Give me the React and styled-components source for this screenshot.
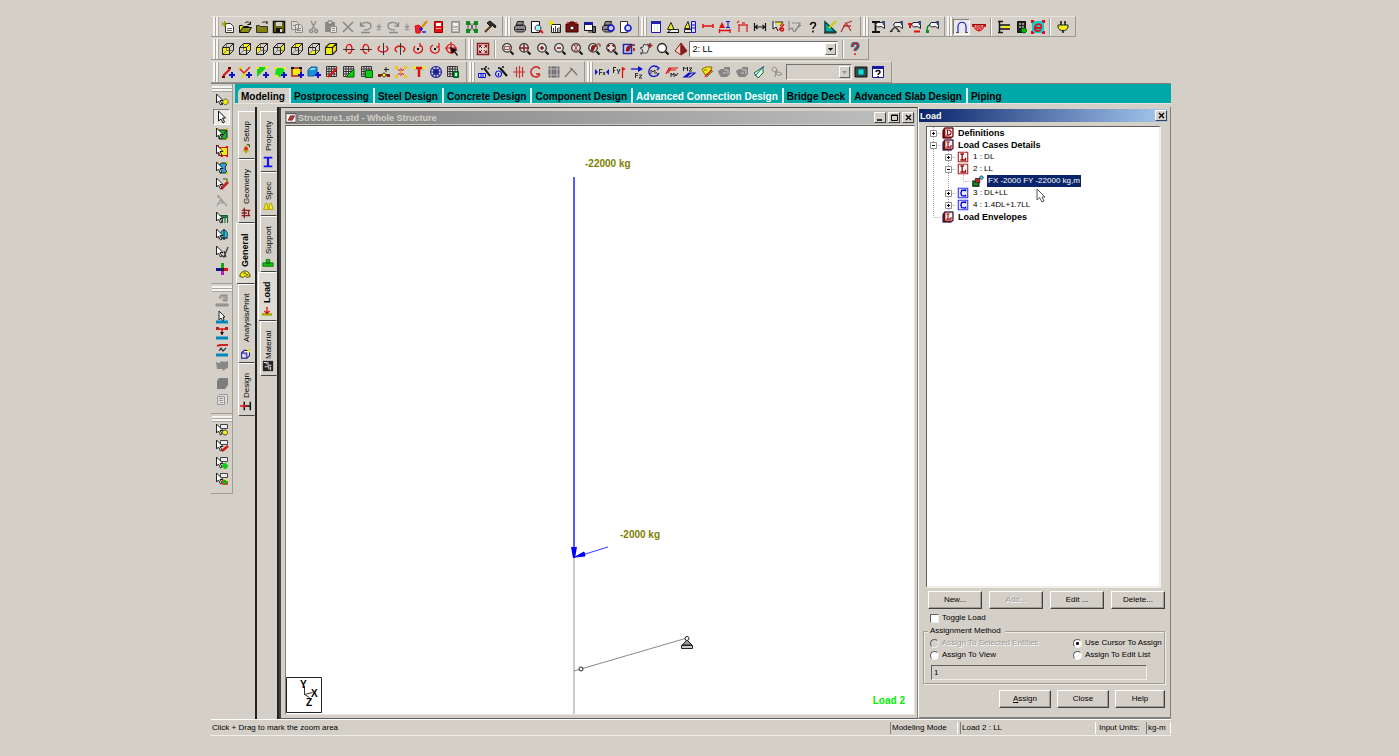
import React, { useState } from 'react'
import styled, { createGlobalStyle } from 'styled-components'

const GlobalStyle = createGlobalStyle`
    * {
        box-sizing: border-box;
    }
    body {
        margin: 0;
        background-color: #d4d0c8;
        color: #000;
        font-family: "Liberation Sans", sans-serif;
        font-size: 8px;
        line-height: 12px;
    }
    button, input, select {
        font: inherit;
        color: inherit;
        margin: 0;
        padding: 0;
    }
`

/* ---------- icons ---------- */

// every icon is a list of [path, fill, stroke, stroke width] on a 14x14 grid
const K = '#111'
const G = '#8a8a8a'
const R = '#e01010'
const M = '#8b1a1a'
const B = '#1010d0'
const Y = '#f4ee10'
const N = 'none'

const CURSOR = ['M1.5 1v9l2-2 2 4 1.5-1-2-3.5h3z', '#fff', '#222', 1]
const LENS = ['M6 1.5a4.3 4.3 0 1 0 .01 0z', '#e4e2de', '#333', 1.2]
const HANDLE = ['M9.5 9.5l3 3', N, K, 2]
const GRID = ['M1.5 1.5h10v10h-10zM4 1.5v10M6.5 1.5v10M9 1.5v10M1.5 4h10M1.5 6.5h10M1.5 9h10', '#ddd', '#333', 1]
const PLUS = ['M11 7v6M8 10h6', N, B, 2]
const PRINTER = ['M4.5 1.5h6l-1 4H3zM1.5 7l2-2h8l1 2v3l-2 2h-7l-2-2zM3 9.5h8', '#8c8a86', '#222', 1]
const WIRE = ['M1.5 5.5h7v7h-7zM1.5 5.5l4-4h7l-4 4M8.5 12.5l4-4v-7', N, '#222', 1]
const HIDDEN = ['M5.5 1.5v7h7M1.5 12.5l4-4', N, '#777', 1]
const HAND = ['M6 2.5h6l1.5 2v4l-3-2-4 .5-2-2z', '#f4f2ee', '#223', 1]
const CUFF = ['M11 1h3v4h-2z', '#3a4a80', N]
const BEAM = ['M1 12h12', N, '#08b', 3]

const cube = (face) => [[face, Y, N], HIDDEN, WIRE]
const lens = (...inner) => [LENS, ...inner, HANDLE]
const pick = (...rest) => [...rest, CURSOR]

const icons = {
  new: [['M4.5 3.5h5l3 3v6h-8z', '#fff', '#333', 1], ['M6 8.5h5M6 10.5h5', N, '#666', 1], ['M3.5 1v6M.5 4h6M1 2l4 4M5 2l-4 4', N, '#a8a000', 1]],
  open: [['M1.5 12V5.5h3l1 1h5v2', Y, K, 1], ['M1.5 12.5l3-5h9l-3 5z', '#908c10', K, 1], ['M7 3c2-2 4-1 5 1M12.5 1.5v3h-3', N, K, 1]],
  folder: [['M1.5 5.5h3l1 1h7v6h-11z', '#85820c', '#333', 1], ['M7 3c2-2 3-1 5 0M12 1v3', N, K, 1]],
  save: [['M1.5 1.5h11v11h-11z', '#6e6c10', K, 1.5], ['M4 2h6v4H4z', '#d4d0c8', N], ['M4 8h6v5H4z', K, N], ['M8 9h2v3H8z', '#ddd', N]],
  copy: [['M1.5 1.5h5l2 2v6h-7zM5.5 4.5h5l2 2v6h-7z', '#dedad2', G, 1], ['M3 5.5h3M7 8.5h4M7 10.5h4', N, G, 1]],
  cut: [['M4 1l4 8M9 1L5 9M4 9.5a1.6 1.6 0 1 0 .1 0M9 9.5a1.6 1.6 0 1 0 .1 0', N, G, 1.3]],
  paste: [['M1.5 2.5h9v9h-9z', '#8d8a84', G, 1], ['M4 1h4v3H4z', '#ddd', '#777', 1], ['M6.5 6.5h6v6h-6z', '#e8e5df', G, 1], ['M8 8.5h3M8 10.5h3', N, G, 1]],
  delete: [['M2 2l10 10M12 2L2 12', N, G, 1.7]],
  undo: [['M2 5c3-4 10-3 10 1s-5 4-7 4M1.5 2v4h4M2 12.5h9', N, G, 1.3]],
  redo: [['M12 5C9 1 2 2 2 6s5 4 7 4M12.5 2v4h-4M3 12.5h9', N, G, 1.3]],
  more: [['M7 1v6M3 5l4 4 4-4M3 12h8', N, G, 1.8]],
  brush: [['M1 6l4-1 3 3-2 5H2z', '#e22', R, 1], ['M6 8l2 2', N, B, 3], ['M13 1L8 7', N, '#d80', 2], ['M8 12h4', N, '#22d', 1.5]],
  bookRed: [['M3.5 1.5h8v11h-8z', '#e11', '#900', 1], ['M5 3h5v3H5z', '#fff', N], ['M5 8h5v1H5z', '#ffb0b0', N]],
  bookGray: [['M3.5 1.5h8v11h-8z', '#b5b2ac', G, 1], ['M5 3h5v3H5z', '#eee', N], ['M5 8.5h5M5 10.5h5', N, '#eee', 1]],
  nodes: [['M5 3l4 8M9 3L5 11M3 5v4M11 5v4', N, '#555', 1], ['M1 1h4v4H1zM9 1h4v4H9zM1 9h4v4H1zM9 9h4v4H9z', '#0a8a20', N]],
  hammer: [['M2 12l7-7', N, '#5c3a10', 2], ['M4 3l3-2 6 5-1 2-3-3-2 1z', '#333', K, 1]],
  printer: [PRINTER],
  preview: [['M1.5 1.5h8v11h-8z', '#fff', K, 1], ['M8 5a3 3 0 1 0 .01 0z', '#9ff', '#333', 1], ['M10 10l3 3', N, R, 2]],
  report: [['M3.5 4.5h9v8h-9z', '#fff', '#222', 1], ['M5.5 8v4M7.5 6v6M9.5 8v4M11 7v5', N, '#444', 1], ['M3 0v6M0 3h6', N, '#e8e000', 1.5]],
  camera: [['M1 4h3l1-2h4l1 2h3v8H1z', '#7c1010', '#300', 1], ['M7 6a2 2 0 1 0 .01 0z', '#fff', K, 1], ['M2 2.5h3M9 2.5h3', N, R, 1]],
  export: [['M1.5 2.5h8v8h-8z', '#fff', K, 1], ['M1 2h9v3H1z', '#1818a0', N], ['M9.5 6.5h3v6h-3zM5 12h5', '#666', K, 1]],
  printInfo: [PRINTER, ['M10 5a3 3 0 1 0 .01 0z', '#cce', B, 1.5]],
  pageInfo: [['M2.5 1.5h7v11h-7z', '#fff', '#333', 1], ['M10 5a3 3 0 1 0 .01 0z', '#cde', B, 1.5]],
  window: [['M2.5 1.5h9v11h-9z', '#fff', '#1818a0', 1], ['M2 1h10v3H2z', '#2020b0', N], ['M5.5 4v8M8.5 4v8', N, '#ddd', 1]],
  level: [['M1.5 12.5h11v-3h-7z', '#eee', '#222', 1], ['M1.5 9.5l3.5-7 3 7z', Y, '#222', 1], ['M1 12.5h12', N, K, 1]],
  levels: [['M1.5 12.5h7v-3h-7z', '#eee', '#222', 1], ['M1.5 8.5l3.5-7 2 7z', Y, '#222', 1], ['M8.5 1.5h4v11h-4zM8 5h5M8 8h5', '#ddf', B, 1]],
  span: [['M2 6h10M2 4v4M12 4v4', N, R, 1.5]],
  spanLoad: [['M1 8h6L4 2z', R, N], ['M1 10.5h11M1.5 9v4M12 9v4', N, R, 1.4], ['M10 1.5v6M8 1.5h4M8 7.5h4', N, B, 1]],
  pins: [['M2 5h10M3 5v7M11 5v7M1 3l2-2M6 3h3', N, '#d33', 1.4]],
  width: [['M1.5 3v8M12.5 3v8M2 7h10M4.5 5l-2 2 2 2M9.5 5l2 2-2 2', N, K, 1.2]],
  probe: [['M2 1v8l3-2 2 4', '#fff', K, 1], ['M4 2h8l-3 4', Y, '#333', 1], ['M13 4l-5 6M11 8a1.5 1.5 0 1 0 .1 0', N, R, 1.5]],
  probeGray: [['M1 1v9l3-2 2 4M4 3h8l-5 9M13 5l-6 5', N, G, 1.2]],
  help: [['M4.5 5C5 1.5 9.5 2 9.5 4.5S7 6.5 7 9M7 10.5v2', N, K, 1.6]],
  setSquare: [['M2 2v10h11z', '#0aa', '#044', 1.5], ['M6 8l7-7', N, '#cc0', 2], ['M1 13h12', N, K, 1]],
  route: [['M1 12L6 3l5 8M3 6h8M7 3l5-2', N, '#b33', 1.3]],
  column: [['M1 2h8M4.5 2v10M1 12h8', N, K, 1.8], HAND, CUFF],
  roof: [['M1 12l5-5 5 5M3 12V9M9 12V9', N, '#333', 1.3], HAND, CUFF],
  load: [['M1 4h4M3 4v4M7 11.5h6', N, R, 2], HAND, CUFF],
  hook: [['M5 5c-3 1-3 3-3 7', N, '#0a8a20', 1.5], ['M1 10h3v3H1z', '#0a8a20', N], HAND, CUFF],
  arch: [['M3 12V6c1-5 7-5 8 0v6', N, '#2020e0', 1.2], ['M1 12.5h3M10 12.5h3', N, '#555', 1]],
  deflect: [['M2 4c1 9 9 9 10 0M5 5v4M9 5v4M7 5v6', N, R, 1.3], ['M0 4h3v3H0zM11 4h3v3h-3z', R, N], ['M1 4.5h12', N, '#900', 1]],
  joint: [['M2.5 1v12M1 1.5h5M1 12.5h5M3 5h10M3 9h10', N, K, 1.5], ['M5 6h8v2H5z', Y, N]],
  building: [['M3.5 1.5h8v11h-8z', '#222', K, 1], ['M5 4h2M8 4h2M5 7h2M8 7h2', N, '#fff', 1.2], ['M10 8a2.5 2.5 0 1 0 .1 0z', '#0b0', '#060', 1]],
  editor: [['M1 1h12v12H1z', '#1cc', N], ['M4 8h6c2-5-5-5-6-1s2 5 6 3', N, R, 1.8], ['M1 3V1h2M11 1h2v2M13 11v2h-2M3 13H1v-2', N, R, 2]],
  plug: [['M2 5h10v2c-1 5-9 5-10 0z', Y, '#222', 1], ['M5 1v4M9 1v4M7 10v3', N, K, 1.5]],

  front: cube('M1.5 5.5h7v7h-7z'),
  back: cube('M5.5 1.5h7v7h-7z'),
  left: cube('M1.5 5.5l4-4v7l-4 4z'),
  right: cube('M8.5 5.5l4-4v7l-4 4z'),
  top: cube('M1.5 5.5l4-4h7l-4 4z'),
  bottom: cube('M1.5 12.5l4-4h7l-4 4z'),
  iso: [['M1.5 5.5l4-4h7v7l-4 4h-7zM1.5 5.5h7v7M8.5 5.5l4-4', Y, '#222', 1.2]],
  rotX: [['M4.5 10C3 1 10 0 10 7c0 3-2 5-4 4', N, R, 1.3], ['M1 7.5h12', N, '#333', 1]],
  rotXn: [['M9.5 10C11 1 4 0 4 7c0 3 2 5 4 4', N, R, 1.3], ['M1 7.5h12', N, '#333', 1]],
  rotY: [['M4 4c-4 3-1 6 3 6s7-3 3-6', N, R, 1.3], ['M7.5 1v12', N, '#333', 1]],
  rotYn: [['M4 10C0 7 3 4 7 4s7 3 3 6', N, R, 1.3], ['M7.5 1v12', N, '#333', 1]],
  rotZ: [['M4 4c-3 4 0 8 4 7s5-6 1-8M9 1v4', N, R, 1.2], ['M6 6h2v2H6z', K, N]],
  rotZn: [['M10 4c3 4 0 8-4 7S1 5 5 3M11 1v4h-3', N, R, 1.2], ['M6 6h2v2H6z', K, N]],
  rotAll: [['M6 2a4.5 4.5 0 1 0 .1 0M6 0v12M0 6h12', N, R, 1.2], ['M5 5l8 3-3 1 3 4-1 1-3-4-2 2z', K, N]],

  whole: [['M1.5 1.5h11v11h-11z', '#e6d0cc', M, 1.5], ['M3 3l3 3M11 3L8 6M3 11l3-3M11 11L8 8', N, M, 1], ['M3 3h3L3 6zM11 3H8l3 3zM3 11h3L3 8zM11 11H8l3-3z', M, N]],
  zoomWin: lens(['M3.5 4.5h5v3h-5z', N, '#a55', 1]),
  zoomFit: lens(['M6 2v8M2 6h8', N, M, 1.5]),
  zoomIn: lens(['M6 4v4M4 6h4', N, M, 1.5]),
  zoomOut: lens(['M4 6h4', N, M, 1.5]),
  zoomAll: lens(['M4 3l4 6M8 3L4 9M4 3h4M4 9h4', N, '#a44', 1]),
  zoomFactor: lens(['M5 4l4-1-3 6H4z', M, M, 1], ['M10 2h3v3', N, M, 1]),
  zoomExt: lens(['M3.5 5V3.5H5M7 3.5h1.5V5M8.5 7v1.5H7M5 8.5H3.5V7', N, M, 1.2]),
  window3d: [['M1.5 2.5h8v9h-8z', '#cdf', '#22a', 1.5], ['M5 5l4-2-2 6H4z', M, M, 1], ['M10 3h3M12 6v3', N, M, 1.5]],
  pan: [['M2 13l2-5-3-2 3-1 1-3 2 1 2-1 1 4-2 5M1 11h7', '#ddd', '#444', 1], ['M11 1v5M8.5 3.5h5', N, M, 1.5]],
  magnify: [['M6 1.5a4.5 4.5 0 1 0 .01 0z', '#fff', '#222', 1.3], HANDLE],
  pyramid: [['M7 1L1 9l6 4z', '#f0d8d0', M, 1], ['M7 1l6 8-6 4z', M, M, 1]],
  whatsThis: [['M4.5 5c-1-5 6-5 5.5-1C10 6.5 7 6 7 9', N, '#1590b0', 3.5], ['M4.5 5c-1-5 6-5 5.5-1C10 6.5 7 6 7 9M7 11v2', N, R, 1.5]],

  addBeam: [['M2 11l7-7', N, R, 2], ['M1 12h3M7 3h3', N, '#600', 2], PLUS],
  addCurve: [['M1 3l5 5 6-6', N, R, 1.3], ['M1 3h3M4 12l4-4', N, '#dd0', 2], PLUS],
  addPlate: [['M2 2h10L2 12z', '#18d018', N], ['M1 3h3M10 2h3', N, Y, 2], PLUS],
  addSurface: [['M3 3h8v7l-4 2-5-2z', '#18e018', N], ['M1 3h3M10 3h3M2 11h3', N, Y, 2], PLUS],
  addParam: [['M2 3h9v8H2z', Y, '#a22', 1.5], ['M1 3h3M9 3h3', N, K, 2], PLUS],
  addSolid: [['M1 5l3-3h6v6l-3 3H1z', '#1a90d8', '#0a60a8', 1], ['M2 5l3-2h4L7 5z', '#8df', N], PLUS],
  gridBeam: [GRID, ['M3 12l9-9', N, R, 2]],
  gridPlate: [GRID, ['M12 4v8H4z', '#10d010', '#060', 1]],
  gridSolid: [GRID, ['M5.5 5.5h7v7h-7z', '#10c818', '#060', 1]],
  insertNode: [['M1 10h12', N, '#222', 2], ['M1 9h3v3H1zM10 9h3v3h-3z', M, N], ['M7 8a2 2 0 1 0 .1 0z', Y, '#444', 1], ['M9 2v5M7 4.5h5', N, '#222', 1]],
  connect: [['M3 3l8 8M11 3L3 11M7 3v8', N, R, 1], ['M1 1h3v3H1zM10 1h3v3h-3zM1 10h3v3H1zM10 10h3v3h-3zM6 6h2v2H6z', '#f0c810', N]],
  tee: [['M2 3h10M7 3v9', N, R, 2.5], ['M1 1h3v3H1zM10 1h3v3h-3z', Y, N]],
  circular: [['M7 1.5a5.5 5.5 0 1 0 .01 0M7 4.5a2.5 2.5 0 1 0 .01 0M7 1v12M1 7h12M3 3l8 8M11 3l-8 8', '#d5d8f0', '#1a1a90', 1.1]],
  generate: [GRID, ['M7.5 6.5h5v6h-5z', '#0a9a20', '#053', 1], ['M9 8h2v3H9z', '#dfd', N]],
  wand1: [['M1.5 8.5h7v4h-7zM4 8v5M6 8v5', '#dde', B, 1], ['M7 3l6 8', N, K, 2], ['M9 1v2M4 4h2M12 3l-1 1', N, K, 1.5]],
  wand2: [['M4.5 6a3 3 0 1 0 .1 0M4.5 8v3', '#dde', B, 1.2], ['M6 3l7 8', N, K, 2], ['M9 1v2M4 3h2', N, K, 1.5]],
  stretch: [['M4.5 2v10M7.5 1v12M10.5 2v10M1 7h12', N, '#c33', 1.2]],
  spin: [['M11 4C7-1 1 4 2 8s7 6 9 1M11 9H7', N, '#c22', 1.5]],
  meshGray: [['M2 2h10v10H2z', '#777', '#666', 1], ['M1 4h12M1 10h12M4 1v12M10 1v12', N, '#bbb', 1]],
  lineGray: [['M1 12l7-8 5 6M6 3l2 1', N, '#777', 1.3]],
  fx: [['M0 4v6l3-3zM14 4v6l-3-3z', B, N], ['M4.5 4v6M4.5 4.5h3M5 7.5h2M8 7l2 3M10 7l-2 3', N, '#333', 1]],
  fy: [['M1.5 2v6M1 2.5h3M1 5.5h2M5 4l1.5 3M8 4l-2 5', N, '#222', 1], ['M10.5 13V2', N, R, 1.3], ['M10 2l4 2-4 2z', R, N]],
  fz: [['M1 4h8', N, B, 1.3], ['M8 1l5 3-5 3z', B, N], ['M5.5 8v5M5 8.5h3M6 10.5h2M9 10h3l-3 3h3', N, '#333', 1]],
  mx: [['M10 2C5-1 1 4 2 8s8 5 10 0M9 1l3 2-2 2', N, B, 1.3], ['M4 9V5l2 2 2-2v4M9 7l2 3', N, '#333', 1]],
  my: [['M1 9l3-6h9M3 5h8M6 3l-3 5', N, R, 1.2], ['M6 12V8l1.5 2L9 8v4M10 9l1 2 2-3', N, '#222', 1]],
  mz: [['M1.5 6V2l2 2 2-2v4M7 3h3L7 6h3', N, '#222', 1], ['M2 12l5-4h6l-5 4zM4 12l5-4', N, B, 1.2]],
  stress: [['M2 4l4-2h6l-2 5-5 3z', Y, '#886600', 1], ['M5 12l7-7', N, R, 1.5], ['M7 12l6-6', N, '#3a3', 1], ['M4 5h3', N, '#886600', 1]],
  solidGray: [['M1 6l3-2h3V2h6v7l-3 3H4L2 9z', '#858585', N], ['M7 5h4v4M6 8h3', N, '#c8c8c8', 1]],
  pane: [['M2 8l9-6v6l-5 5z', '#dfd', '#0a7a20', 1], ['M3 11l9-10', N, '#33c', 1]],
  loopGray: [['M2 5c0-5 7-2 4 1s4 6 6 3M2 5c3 4 7 0 10 4M5 12l2-7', N, G, 1]],
  screen: [['M1 2h12v10H1z', '#444', K, 1], ['M4 4h6v6H4z', '#1dd', '#066', 1]],
  helpBox: [['M1.5 1.5h11v11h-11z', '#fff', '#1818a0', 1], ['M1 1h12v3H1z', '#1818a0', N], ['M5 7c0-2 4-2 4 0s-2 1-2 3M7 11v1', N, K, 1.5]],

  pickNode: pick(['M10.5 6a2.8 2.8 0 1 0 .01 0z', Y, '#664', 1], ['M6 11h2', N, '#333', 2]),
  pickBeam: [['M3.5 1v10l2.5-2 2 4 1.5-1-2-4h3z', '#fff', K, 1]],
  pickPlate: pick(['M3 3h9v9H4z', '#18b828', '#222', 1], ['M2 2h2M11 2h2M11 12h2', N, '#cc0', 2], ['M5 12l7-9', N, '#222', 1]),
  pickSurface: pick(['M3.5 3.5h9v8h-9z', Y, R, 1], ['M2 2h2M11 3h2M11 12h2M6 12h2', N, R, 2]),
  pickSolid: pick(['M4 4l3-2h5l-2 5 2 5H5z', '#28a8d8', '#222', 1], ['M2 2h2M11 2h2M11 12h2', N, '#cc0', 2]),
  pickMember: pick(['M6 12l7-7', N, '#c22', 3], ['M8 2h4v3', Y, '#444', 1]),
  pickText: [['M3 1l2 3 7 8M2 12l4-7 2 4H4M3 1v3', N, '#999', 1.2]],
  pickDim: pick(['M4.5 4.5h8v2h-8zM7.5 7v5M10 7v5M12.5 7v5', '#2a8a4a', '#076030', 1]),
  pickSupport: pick(['M9 2a3.5 4.5 0 1 0 .01 0z', '#28c0d8', '#146', 1], ['M9 1v11M3 10h10', N, '#222', 1]),
  pickRelease: pick(['M6 10l3 2 4-10M9 6l2 6', N, '#333', 1.2]),
  axes: [['M7.5 1v5', N, '#12a812', 3], ['M9 7.5h4', N, R, 3], ['M1 7.5h5', N, '#10109a', 3], ['M7.5 9v4', N, '#b020c0', 3], ['M6 6h3v3H6z', '#222', N]],
  slabGray: [['M4 5l2-3h6v6H8M1 11h12v2H1z', '#a5a29c', '#888', 1], ['M7 4v3', N, '#ddd', 1]],
  loadCursor: [['M4 1v9l2-2 2 3 1-1-1-3h2z', '#fff', '#222', 1], BEAM],
  loadUdl: [['M1 3h12M7 3v6', N, R, 1.5], ['M5 6l2 3 2-3z', K, N], ['M1 1h3v3H1zM10 1h3v3h-3z', '#a22', N], BEAM],
  loadTrap: [['M2 3l3-1h8', N, '#c22', 2], ['M4 8l2-3 2 3 3-3', N, '#333', 1.2], BEAM],
  blobGray: [['M1 3l3 1 3-2 2 1 4-1v7l-3 1-1 2-2-2H2z', '#888', N]],
  cubeGray: [['M2 5l2-3h9v7l-3 4H2z', '#7d7d7d', N]],
  frameGray: [['M2.5 4.5h7v8h-7zM4 2.5h8.5v9', '#ddd', '#999', 1], ['M4 6.5h4M4 8.5h4M5 10.5h3', N, '#999', 1]],
  tagNode: pick(['M5.5 1.5h7v4h-7z', '#eee', '#444', 1], ['M10 7a2.5 2.5 0 1 0 .01 0z', Y, '#444', 1]),
  tagBeam: pick(['M5.5 1.5h7v4h-7z', '#eee', '#444', 1], ['M7 12l6-5', N, R, 2.5]),
  tagPlate: pick(['M5.5 1.5h7v4h-7z', '#eee', '#444', 1], ['M10 7v6M7 10h6', N, '#1c1', 3]),
  tagSolid: pick(['M5.5 1.5h7v4h-7z', '#eee', '#444', 1], ['M7 8h6v5H7z', '#d42', N], ['M7 10h6M10 8v5', N, '#0b2', 1.5], ['M11 7h2v2h-2z', Y, N]),

  tabSetup: [['M7 3v9M4 9h6', N, '#b8a000', 2], ['M5 5h4v3H5z', R, N], ['M8 2h3v3', Y, K, 1]],
  tabGeometry: [['M2 4h10M2 10h10M5 1v12M10 4v6M2 7h6', N, M, 1.5]],
  tabGeneral: [['M1 10c0-6 7-9 11-4l1 4-4 1-2-2-2 2z', Y, '#332', 1], ['M5 6h3M8 8h3', N, K, 1]],
  tabAnalysis: [['M2 7l3-3h6v6l-3 3H2z', '#fff', '#1a1a90', 1.3], ['M2 7h6v6', '#bbe', '#1a1a90', 1.2], ['M8 2l4 4', N, Y, 2]],
  tabDesign: [['M12 2v10M5 2v10M5 7h7', N, K, 1.8], ['M0 7h7M5 5v4', N, R, 2]],
  tabProperty: [['M2 2h10M2 12h10', N, '#1212ff', 2], ['M7 2v10', N, '#1212ff', 2.5]],
  tabSpec: [['M2 11l2-7h2l1 7zM8 11l1-7h2l2 7z', Y, '#aa9800', 1]],
  tabSupport: [['M1 8h12v4H1zM5 4h4v5H5z', '#11c511', '#087008', 1]],
  tabLoad: [['M1 11h12', N, '#a0b000', 3], ['M7 2v8M4 7l3 3 3-3', N, R, 1.5]],
  tabMaterial: [['M1 1h12v12H1z', '#222', N], ['M2 3h3v2M7 2v4h4M3 8h5v3M10 8v4', N, '#ddd', 1.2]],

  bookD: [['M1 4l2-3h10v10l-2 2H1z', '#7c0c10', '#600', 1], ['M4 2h8v9H4z', '#fff', N], ['M5 3.5h3c4 1 3 5 0 6H5M6.5 3v7', N, '#a00', 1.3]],
  bookL: [['M1 4l2-3h10v10l-2 2H1z', '#7c0c10', '#226', 1], ['M4 2h8v9H4z', '#fff', N], ['M5 3.5h4M7 3v6.5M5 9.5h5.5V7', N, '#a00', 1.3]],
  caseL: [['M1.5 1.5h11v11h-11z', '#fff', '#a22', 1.3], ['M4 3.5h4M6 3v7.5M4 10.5h6V8', N, '#900', 1.5]],
  caseC: [['M1.5 1.5h11v11h-11z', '#e8ebff', '#33f', 1.3], ['M10 5V3.5L5.5 4 4.5 7l1 3 4.5.5V9', N, '#00c', 1.5]],
  loadItem: [['M1 7h7v6H1z', '#0a9a20', K, 1.3], ['M4 4h5v5H4z', '#c22', '#222', 1], ['M11 1a2 2 0 1 0 .01 0z', '#5cf', '#124', 1]],
  app: [['M0 1h14v12H0z', '#fff', '#222', 1], ['M3 10l3-6h6l-3 6z', '#b33', '#722', 1]],
}

const IconSvg = styled.svg`
    width: ${props => props.$size}px;
    height: ${props => props.$size}px;
    flex-shrink: 0;
    display: block;
`

const Icon = ({ name, size = 14 }) => (
  <IconSvg viewBox="0 0 14 14" $size={size} aria-hidden="true">
    {icons[name].map(([d, fill, stroke = N, width = 1], i) => (
      <path key={i} d={d} fill={fill} stroke={stroke} strokeWidth={width} />
    ))}
  </IconSvg>
)

/* ---------- shell ---------- */

const Page = styled.div`
    display: grid;
    grid-template-columns: 211fr 960fr 228fr;
    min-height: 100vh;
    padding: 16px 0 20px;
`

const Shell = styled.div`
    grid-column: 2;
    display: flex;
    flex-direction: column;
    min-width: 0;
`

const ToolRow = styled.div`
    display: flex;
    height: ${props => props.$height}px;
    border-bottom: 1px solid ${props => props.$last ? '#808080' : 'transparent'};
`

const Toolbar = styled.div`
    display: flex;
    align-items: center;
    width: ${props => props.$width}px;
    padding: 0 4px 0 2px;
    border-right: 1px solid #999690;
    border-bottom: 1px solid #999690;
    border-top: 1px solid #e6e3dd;
`

const Grip = styled.span`
    flex-shrink: 0;
    width: 6px;
    height: 100%;
    background: linear-gradient(90deg, #f6f5f2 0 2px, #aaa69e 2px 3px, #f6f5f2 3px 5px, #aaa69e 5px);
`

const Tools = styled.div`
    flex: 1;
    display: flex;
    align-items: center;
    justify-content: space-between;
`

const ToolButton = styled.button`
    display: flex;
    align-items: center;
    justify-content: center;
    width: ${props => props.$small ? 10 : 17}px;
    height: 16px;
    border: 1px solid;
    border-color: ${props => props.$pressed ? '#808080 #fff #fff #808080' : 'transparent'};
    background-color: ${props => props.$pressed ? '#ebe9e4' : 'transparent'};
`

const Divider = styled.span`
    width: 2px;
    height: 18px;
    margin: 0 3px;
    border-left: 1px solid #a09d96;
    border-right: 1px solid #fff;
`

const SelectBox = styled.span`
    display: flex;
    width: ${props => props.$width}px;
    height: 16px;
    padding: 1px;
    border: 1px solid;
    border-color: #707070 #f0eee9 #f0eee9 #707070;
    background-color: ${props => props.$disabled ? '#d4d0c8' : '#fff'};
`

const Select = styled.select`
    flex: 1;
    min-width: 0;
    appearance: none;
    border: none;
    padding-left: 1px;
    background: transparent;
    font-size: 9px;
    line-height: 12px;
`

const DropArrow = styled.span`
    display: flex;
    align-items: center;
    justify-content: center;
    width: 11px;
    background-color: #d4d0c8;
    border: 1px solid;
    border-color: #fff #606060 #606060 #fff;
    color: ${props => props.$disabled ? '#909090' : '#000'};
`

const Body = styled.div`
    flex: 1;
    display: flex;
`

const SideBar = styled.div`
    width: 24px;
    flex-shrink: 0;
`

const SideGroup = styled.div`
    width: 22px;
    height: ${props => props.$height}px;
    display: flex;
    flex-direction: column;
    align-items: center;
    padding: 2px 0 6px;
    border-right: 1px solid #a09d96;
    border-bottom: 1px solid #a09d96;
`

const SideGrip = styled.span`
    width: 20px;
    height: 6px;
    flex-shrink: 0;
    background: linear-gradient(#f6f5f2 0 2px, #aaa69e 2px 3px, #f6f5f2 3px 5px, #aaa69e 5px);
`

const SideTools = styled.div`
    flex: 1;
    display: flex;
    flex-direction: column;
    justify-content: space-between;
`

const Content = styled.div`
    flex: 1;
    min-width: 0;
    display: flex;
    flex-direction: column;
`

const ModeTabs = styled.nav`
    display: flex;
    align-items: flex-end;
    height: 20px;
    padding-left: 3px;
    background-color: #00a8a8;
    border-bottom: 1px solid #e6e3dd;
`

const ModeTab = styled.a`
    height: 15px;
    padding: 0 4px 0 3px;
    border-right: 2px solid ${props => props.$last ? 'transparent' : '#dff2f0'};
    background-color: ${props => props.$active ? '#d4d0c8' : 'transparent'};
    border-radius: ${props => props.$active ? '5px 0 0 0' : '0'};
    color: ${props => props.$light ? '#fff' : '#000'};
    font-size: 10px;
    font-weight: bold;
    line-height: 17px;
    text-decoration: none;
    white-space: nowrap;
`

const Workspace = styled.div`
    flex: 1;
    display: flex;
    padding-top: 3px;
`

const PageTabs = styled.div`
    display: flex;
    flex-direction: column;
    align-items: flex-end;
    width: 22px;
    padding-top: 4px;
    flex-shrink: 0;
    border-right: 2px solid #222;
`

const PageTab = styled.button`
    display: flex;
    align-items: center;
    justify-content: space-between;
    writing-mode: vertical-rl;
    transform: rotate(180deg);
    width: ${props => props.$active ? 19 : 17}px;
    height: ${props => props.$height}px;
    padding: 3px 0 9px;
    border: 1px solid;
    border-color: #444 #fff #fff transparent;
    border-radius: 0 2px 0 0;
    background-color: ${props => props.$active ? '#dedbd4' : 'transparent'};
    font-size: ${props => props.$active ? 9 : 8}px;
    font-weight: ${props => props.$active ? 'bold' : 'normal'};
    line-height: 13px;
    white-space: nowrap;

    svg {
        transform: rotate(180deg);
    }
`

/* ---------- model window ---------- */

const ModelWindow = styled.section`
    flex: 1;
    min-width: 0;
    display: flex;
    flex-direction: column;
    padding: 3px 2px 3px 4px;
    border: 1px solid;
    border-color: #444 #808080 #606060 #444;
    border-left-width: 2px;
    background-color: #d4d0c8;
`

const TitleBar = styled.header`
    display: flex;
    align-items: center;
    gap: 2px;
    height: 13px;
    padding: 0 1px;
    background: ${props => props.$active
        ? 'linear-gradient(90deg, #0a246a, #a6caf0)'
        : 'linear-gradient(90deg, #808080, #c0c0c0)'};
    color: ${props => props.$active ? '#fff' : '#d4d0c8'};
    font-size: 9px;
    font-weight: bold;
`

const TitleText = styled.span`
    flex: 1;
`

const WindowButton = styled.button`
    display: flex;
    align-items: center;
    justify-content: center;
    width: 12px;
    height: 11px;
    color: #000;
    background-color: #d4d0c8;
    border: 1px solid;
    border-color: #fff #404040 #404040 #fff;
`

const Canvas = styled.div`
    flex: 1;
    min-height: 0;
    margin-top: 1px;
    border: 1px solid;
    border-color: #606060 #e6e3dd #e6e3dd #808080;
    background-color: #fff;

    svg {
        display: block;
        width: 100%;
        height: 100%;
    }
    text {
        font-size: 10px;
        font-weight: bold;
    }
`

/* ---------- load panel ---------- */

const Panel = styled.section`
    display: flex;
    flex-direction: column;
    width: 253px;
    flex-shrink: 0;
    padding: 2px 2px 9px 0;
    border-left: 1px solid #fff;
    border-bottom: 2px solid #808080;
    border-right: 1px solid #808080;
`

const PanelBody = styled.div`
    flex: 1;
    display: flex;
    flex-direction: column;
    padding: 4px 3px 0 4px;
`

const Tree = styled.ul`
    position: relative;
    flex: 1;
    margin: 0 4px 3px 3px;
    padding: 0;
    list-style: none;
    background-color: #fff;
    border: 1px solid;
    border-color: #606060 #f0eee9 #f0eee9 #606060;
    border-width: 1px 2px 2px 1px;
`

const TreeRow = styled.li`
    display: flex;
    align-items: center;
    height: 12px;
    font-size: ${props => props.$bold ? 9 : 8}px;
    font-weight: ${props => props.$bold ? 'bold' : 'normal'};
`

const TreeLine = styled.svg`
    width: 15px;
    height: 12px;
`

const TreeLabel = styled.span`
    margin-left: 3px;
    padding: 0 1px;
    color: ${props => props.$selected ? '#fff' : '#000'};
    background-color: ${props => props.$selected ? '#0a246a' : 'transparent'};
`

const Pointer = styled.svg`
    position: absolute;
    left: 109px;
    top: 61px;
    width: 10px;
    height: 16px;
`

const ButtonRow = styled.div`
    display: flex;
    justify-content: ${props => props.$end ? 'flex-end' : 'space-between'};
    gap: 6px;
    padding-left: 5px;
`

const PushButton = styled.button`
    width: ${props => props.$width}px;
    height: 18px;
    background-color: #d4d0c8;
    border: 1px solid;
    border-color: #fff #404040 #404040 #fff;
    box-shadow: inset -1px -1px 0 #a09d96;

    &:disabled {
        color: #999;
        text-shadow: 1px 1px 0 #fff;
    }
`

const Option = styled.label`
    display: flex;
    align-items: center;
    gap: 3px;
    height: 12px;
    white-space: nowrap;
    color: ${props => props.$disabled ? '#999' : 'inherit'};
    text-shadow: ${props => props.$disabled ? '1px 1px 0 #fff' : 'none'};

    input {
        appearance: none;
        flex-shrink: 0;
        width: 9px;
        height: 9px;
        background-color: #fff;
        border: 1px solid;
        border-color: #606060 #f0eee9 #f0eee9 #606060;
    }
    input[type='radio'] {
        border-radius: 50%;
    }
    input:disabled {
        background-color: #d4d0c8;
    }
    input:checked {
        background-image: radial-gradient(#000 0 1px, transparent 2px);
    }
`

const ToggleRow = styled.div`
    padding: 3px 7px 1px;
`

const Group = styled.fieldset`
    display: grid;
    grid-template-columns: 1fr 91px;
    margin: 0;
    padding: 0 0 3px 6px;
    min-width: 0;
    border: 1px solid #a09d96;
    box-shadow: inset 1px 1px 0 #eeece6, 1px 1px 0 #eeece6;

    legend {
        padding: 0 4px 0 2px;
        margin-left: -2px;
        background-color: #d4d0c8;
    }
`

const ListInput = styled.input`
    grid-column: 1 / -1;
    height: 15px;
    margin: 4px 17px 0 1px;
    padding-left: 2px;
    background-color: #d4d0c8;
    border: 1px solid;
    border-color: #606060 #f0eee9 #f0eee9 #606060;
`

const FooterRow = styled(ButtonRow)`
    padding-top: 6px;
`

const StatusBar = styled.footer`
    display: flex;
    align-items: center;
    height: 17px;
    gap: 2px;
    border-top: 1px solid #fff;
    border-bottom: 1px solid #f0eee9;
`

const StatusCell = styled.span`
    width: ${props => props.$width ? props.$width + 'px' : 'auto'};
    flex: ${props => props.$width ? 'none' : 1};
    padding-left: ${props => props.$plain ? 0 : 1}px;
    white-space: nowrap;
    border-left: 1px solid ${props => props.$plain ? 'transparent' : '#808080'};
    border-right: 1px solid ${props => props.$plain ? 'transparent' : '#fff'};
`

/* ---------- data ---------- */

const toolRows = [
  {
    height: 22,
    bars: [
      { width: 292, items: ['new', 'open', 'folder', 'save', 'copy', 'cut', 'paste', 'delete', 'undo', 'more', 'redo', 'more', 'brush', 'bookRed', 'bookGray', 'nodes', 'hammer'] },
      { width: 136, items: ['printer', 'preview', 'report', 'camera', 'export', 'printInfo', 'pageInfo'] },
      { width: 222, items: ['window', 'level', 'levels', 'span', 'spanLoad', 'pins', 'width', 'probe', 'probeGray', 'help', 'setSquare', 'route'] },
      { width: 84, items: ['column', 'roof', 'load', 'hook'] },
      { width: 131, items: ['arch', 'deflect', '|', 'joint', 'building', 'editor', '|', 'plug'] },
    ],
  },
  {
    height: 23,
    bars: [
      { width: 255, items: ['front', 'back', 'left', 'right', 'top', 'bottom', 'iso', 'rotX', 'rotXn', 'rotY', 'rotYn', 'rotZ', 'rotZn', 'rotAll'] },
      { width: 403, items: ['whole', '|', 'zoomWin', 'zoomFit', 'zoomIn', 'zoomOut', 'zoomAll', 'zoomFactor', 'zoomExt', 'window3d', 'pan', 'magnify', 'pyramid', { label: 'Active load', value: '2: LL', width: 149 }, '|', 'whatsThis'] },
    ],
  },
  {
    height: 23,
    bars: [
      { width: 256, items: ['addBeam', 'addCurve', 'addPlate', 'addSurface', 'addParam', 'addSolid', 'gridBeam', 'gridPlate', 'gridSolid', 'insertNode', 'connect', 'tee', 'circular', 'generate'] },
      { width: 118, items: ['wand1', 'wand2', 'stretch', 'spin', 'meshGray', 'lineGray'] },
      { width: 307, items: ['fx', 'fy', 'fz', 'mx', 'my', 'mz', 'stress', 'solidGray', 'solidGray', 'pane', 'loopGray', { label: 'Mode', value: '', width: 66, disabled: true }, 'screen', 'helpBox'] },
    ],
  },
]

const sideGroups = [
  { height: 200, items: ['pickNode', 'pickBeam', 'pickPlate', 'pickSurface', 'pickSolid', 'pickMember', 'pickText', 'pickDim', 'pickSupport', 'pickRelease', 'axes'] },
  { height: 130, items: ['slabGray', 'loadCursor', 'loadUdl', 'loadTrap', 'blobGray', 'cubeGray', 'frameGray'] },
  { height: 80, items: ['tagNode', 'tagBeam', 'tagPlate', 'tagSolid'] },
]

const modes = ['Modeling', 'Postprocessing', 'Steel Design', 'Concrete Design', 'Component Design', 'Advanced Connection Design', 'Bridge Deck', 'Advanced Slab Design', 'Piping']

const pageTabs = [
  { label: 'Setup', icon: 'tabSetup', height: 48 },
  { label: 'Geometry', icon: 'tabGeometry', height: 64 },
  { label: 'General', icon: 'tabGeneral', height: 61, active: true },
  { label: 'Analysis/Print', icon: 'tabAnalysis', height: 79 },
  { label: 'Design', icon: 'tabDesign', height: 53 },
]

const subTabs = [
  { label: 'Property', icon: 'tabProperty', height: 61 },
  { label: 'Spec', icon: 'tabSpec', height: 44 },
  { label: 'Support', icon: 'tabSupport', height: 56 },
  { label: 'Load', icon: 'tabLoad', height: 49, active: true },
  { label: 'Material', icon: 'tabMaterial', height: 55 },
]

// lines: | pass through, + closed node, - open node, L last branch
const treeRows = [
  { lines: '+', icon: 'bookD', label: 'Definitions', bold: true },
  { lines: '-', icon: 'bookL', label: 'Load Cases Details', bold: true },
  { lines: '|+', icon: 'caseL', label: '1 : DL' },
  { lines: '|-', icon: 'caseL', label: '2 : LL' },
  { lines: '||L', icon: 'loadItem', label: 'FX -2000 FY -22000 kg,m', selected: true },
  { lines: '|+', icon: 'caseC', label: '3 : DL+LL' },
  { lines: '|+', icon: 'caseC', label: '4 : 1.4DL+1.7LL' },
  { lines: 'L', icon: 'bookL', label: 'Load Envelopes', bold: true },
]

const methods = [
  { label: 'Assign To Selected Entities', disabled: true },
  { label: 'Use Cursor To Assign' },
  { label: 'Assign To View' },
  { label: 'Assign To Edit List' },
]

/* ---------- components ---------- */

const Arrow = () => (
  <svg width="5" height="3" viewBox="0 0 5 3" aria-hidden="true">
    <path d="M0 0h5L2.5 3z" fill="currentColor" />
  </svg>
)

const ToolItem = ({ item }) => {
  if (item === '|') return <Divider />
  if (item.label) {
    return (
      <SelectBox $width={item.width} $disabled={item.disabled}>
        <Select aria-label={item.label} disabled={item.disabled}>
          <option>{item.value}</option>
        </Select>
        <DropArrow $disabled={item.disabled}><Arrow /></DropArrow>
      </SelectBox>
    )
  }
  return (
    <ToolButton type="button" aria-label={item} $small={item === 'more'} $pressed={item === 'arch' || item === 'pickBeam'}>
      <Icon name={item} size={item === 'more' ? 8 : 14} />
    </ToolButton>
  )
}

const TreeCell = ({ type }) => (
  <TreeLine viewBox="0 0 15 12" aria-hidden="true">
    <path
      d={type === '|' ? 'M6.5 0v12' : type === 'L' ? 'M6.5 0v6M6.5 6.5h8' : 'M6.5 0v12M6.5 6.5h8'}
      fill="none"
      stroke="#aaa"
      strokeDasharray="1 1"
    />
    {(type === '+' || type === '-') && (
      <>
        <path d="M3.5 3.5h6v6h-6z" fill="#fff" stroke="#909090" />
        <path d={type === '+' ? 'M5 6.5h3M6.5 5v3' : 'M5 6.5h3'} stroke="#000" />
      </>
    )}
  </TreeLine>
)

const Tabs = ({ items }) => (
  <PageTabs>
    {items.map(tab => (
      <PageTab key={tab.label} type="button" $height={tab.height} $active={tab.active}>
        <Icon name={tab.icon} size={12} />
        {tab.label}
      </PageTab>
    ))}
  </PageTabs>
)

const Structure = () => (
  <svg viewBox="0 0 628 588" preserveAspectRatio="xMinYMin meet">
    <path d="M288 432v156" stroke="#999" />
    <path d="M288 51v375" stroke="#1414ff" strokeWidth="1.4" />
    <path d="M285 421h6l-2 11h-2z" fill="#00f" />
    <path d="M322 421l-26 8" stroke="#33f" />
    <path d="M289 431l9-5 1 4z" fill="#00f" stroke="#00f" />
    <path d="M288 545l113-33" stroke="#888" />
    <circle cx="295" cy="543" r="2" fill="#fff" stroke="#222" />
    <path d="M401 514l-5 5h10z" fill="#999" stroke="#222" />
    <path d="M395.5 519.5h11v3h-11z" fill="#ccc" stroke="#222" />
    <circle cx="401" cy="512.5" r="2" fill="#fff" stroke="#222" />
    <text x="299" y="41" fill="#808000">-22000 kg</text>
    <text x="334" y="412" fill="#808000">-2000 kg</text>
    <path d="M.5 551.5h35v35H.5z" fill="#fff" stroke="#222" />
    <path d="M18.5 560v8.5l8-2M18.5 568.5l5 3" fill="none" stroke="#333" />
    <text x="14" y="562">Y</text>
    <text x="25" y="571">X</text>
    <text x="20" y="580">Z</text>
    <text x="619" y="578" textAnchor="end" fill="#00f000">Load 2</text>
  </svg>
)

const LoadPanel = () => {
  const [method, setMethod] = useState('Use Cursor To Assign')

  return (
    <Panel>
      <TitleBar $active>
        <TitleText>Load</TitleText>
        <WindowButton type="button" aria-label="Close panel">
          <svg width="7" height="7" viewBox="0 0 7 7"><path d="M1 1l5 5M6 1L1 6" stroke="#000" strokeWidth="1.3" /></svg>
        </WindowButton>
      </TitleBar>
      <PanelBody>
        <Tree>
          {treeRows.map(row => (
            <TreeRow key={row.label} $bold={row.bold}>
              {row.lines.split('').map((type, i) => <TreeCell key={i} type={type} />)}
              <Icon name={row.icon} size={12} />
              <TreeLabel $selected={row.selected}>{row.label}</TreeLabel>
            </TreeRow>
          ))}
          <Pointer viewBox="0 0 10 16" aria-hidden="true">
            <path d="M1 1v11l2.5-2.5L6 14l2-1-2-4h3z" fill="#fff" stroke="#556" />
          </Pointer>
        </Tree>
        <ButtonRow>
          <PushButton type="button" $width={54}>New...</PushButton>
          <PushButton type="button" $width={54} disabled>Add...</PushButton>
          <PushButton type="button" $width={54}>Edit ...</PushButton>
          <PushButton type="button" $width={54}>Delete...</PushButton>
        </ButtonRow>
        <ToggleRow>
          <Option><input type="checkbox" />Toggle Load</Option>
        </ToggleRow>
        <Group>
          <legend>Assignment Method</legend>
          {methods.map(({ label, disabled }) => (
            <Option key={label} $disabled={disabled}>
              <input
                type="radio"
                name="method"
                disabled={disabled}
                checked={method === label}
                onChange={() => setMethod(label)}
              />
              {label}
            </Option>
          ))}
          <ListInput aria-label="Edit list" defaultValue="1" />
        </Group>
        <FooterRow $end>
          <PushButton type="button" $width={52}><u>A</u>ssign</PushButton>
          <PushButton type="button" $width={52}>Close</PushButton>
          <PushButton type="button" $width={50}>Help</PushButton>
        </FooterRow>
      </PanelBody>
    </Panel>
  )
}

const App = () => {
  return (
    <Page>
      <GlobalStyle />
      <Shell>
        {toolRows.map((row, r) => (
          <ToolRow key={r} $height={row.height} $last={r === 2}>
            {row.bars.map((bar, b) => (
              <Toolbar key={b} $width={bar.width}>
                <Grip />
                <Tools>
                  {bar.items.map((item, i) => <ToolItem key={i} item={item} />)}
                </Tools>
              </Toolbar>
            ))}
          </ToolRow>
        ))}
        <Body>
          <SideBar>
            {sideGroups.map((group, g) => (
              <SideGroup key={g} $height={group.height}>
                <SideGrip />
                <SideTools>
                  {group.items.map(item => <ToolItem key={item} item={item} />)}
                </SideTools>
              </SideGroup>
            ))}
          </SideBar>
          <Content>
            <ModeTabs>
              {modes.map((mode, i) => (
                <ModeTab key={mode} href="#" $active={i === 0} $light={i === 5} $last={i === 8}>{mode}</ModeTab>
              ))}
            </ModeTabs>
            <Workspace>
              <Tabs items={pageTabs} />
              <Tabs items={subTabs} />
              <ModelWindow>
                <TitleBar>
                  <Icon name="app" size={10} />
                  <TitleText>Structure1.std - Whole Structure</TitleText>
                  <WindowButton type="button" aria-label="Minimize">
                    <svg width="7" height="7" viewBox="0 0 7 7"><path d="M0 6h5" stroke="#000" strokeWidth="1.5" /></svg>
                  </WindowButton>
                  <WindowButton type="button" aria-label="Maximize">
                    <svg width="7" height="7" viewBox="0 0 7 7"><path d="M.5 1h6v5.500h-6zM.5 1.5h6" fill="none" stroke="#000" /></svg>
                  </WindowButton>
                  <WindowButton type="button" aria-label="Close">
                    <svg width="7" height="7" viewBox="0 0 7 7"><path d="M1 1l5 5M6 1L1 6" stroke="#000" strokeWidth="1.3" /></svg>
                  </WindowButton>
                </TitleBar>
                <Canvas>
                  <Structure />
                </Canvas>
              </ModelWindow>
              <LoadPanel />
            </Workspace>
          </Content>
        </Body>
        <StatusBar>
          <StatusCell $plain>Click + Drag to mark the zoom area</StatusCell>
          <StatusCell $width={68}>Modeling Mode</StatusCell>
          <StatusCell $width={136}>Load 2 : LL</StatusCell>
          <StatusCell $width={46} $plain>Input Units:</StatusCell>
          <StatusCell $width={25}>kg-m</StatusCell>
        </StatusBar>
      </Shell>
    </Page>
  )
}

export default App
